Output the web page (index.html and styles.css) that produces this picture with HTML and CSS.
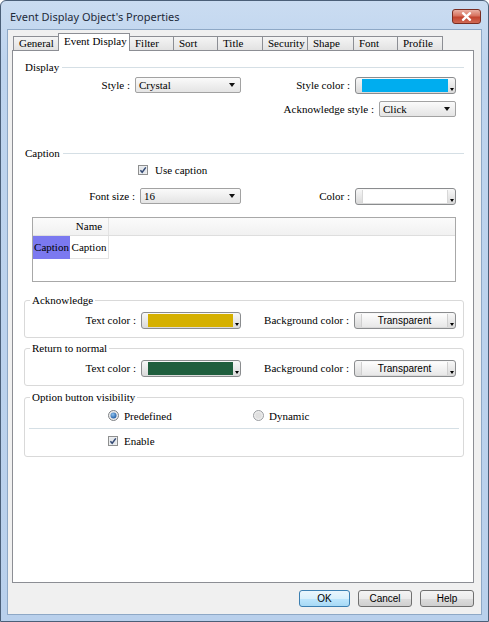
FILE: index.html
```html
<!DOCTYPE html>
<html lang="en">
<head>
  <meta charset="UTF-8" />
  <title>Event Display Object's Properties</title>
  <link rel="stylesheet" href="styles.css">
</head>
<body>
  <div class="window">
    <div class="titlebar">
      <span class="title">Event Display Object's Properties</span>
      <div class="close-btn">
        <svg viewBox="0 0 27 13" width="27" height="13"><path d="M10 3.2 L17 9.8 M17 3.2 L10 9.8" stroke="#fff" stroke-width="2.4" stroke-linecap="round"/></svg>
      </div>
    </div>

    <div class="client">
      <div class="tabs">
        <div class="tab w46">General</div>
        <div class="tab active w72">Event Display</div>
        <div class="tab w45">Filter</div>
        <div class="tab w45">Sort</div>
        <div class="tab w46">Title</div>
        <div class="tab w46">Security</div>
        <div class="tab w47">Shape</div>
        <div class="tab w45">Font</div>
        <div class="tab w46">Profile</div>
      </div>

      <div class="panel">
        <!-- Display -->
        <div class="grp-head">Display</div>
        <div class="row r-style">
          <div class="field">
            <span class="lbl lw111">Style :</span>
            <div class="combo cw106"><span>Crystal</span><i class="arrow"></i></div>
          </div>
          <div class="field push">
            <span class="lbl">Style color :</span>
            <div class="cpick cw101"><span class="swatch sw-blue"></span><i class="corner"></i></div>
          </div>
        </div>
        <div class="row r-ack">
          <div class="field push">
            <span class="lbl">Acknowledge style :</span>
            <div class="combo cw77"><span>Click</span><i class="arrow"></i></div>
          </div>
        </div>

        <!-- Caption -->
        <div class="grp-head gh-caption">Caption</div>
        <div class="check-row cr-caption">
          <svg class="chk" viewBox="0 0 10 10" width="10" height="10"><rect x=".5" y=".5" width="9" height="9" fill="#f3f3f3" stroke="#8e8f8f"/><rect x="1.5" y="1.5" width="7" height="7" fill="#e4e7eb"/><path d="M2.4 5.2 L4.2 7.3 L7.8 2.4" fill="none" stroke="#344a74" stroke-width="1.5"/></svg>
          <span>Use caption</span>
        </div>
        <div class="row r-font">
          <div class="field">
            <span class="lbl lw116">Font size :</span>
            <div class="combo cw101"><span>16</span><i class="arrow"></i></div>
          </div>
          <div class="field push">
            <span class="lbl">Color :</span>
            <div class="cpick cw101"><span class="swatch sw-white"></span><i class="corner"></i></div>
          </div>
        </div>
        <div class="grid">
          <div class="g-head"><span class="g-corner"></span><span class="g-col">Name</span></div>
          <div class="g-row"><span class="g-sel">Caption</span><span class="g-cell">Caption</span></div>
        </div>

        <!-- Acknowledge -->
        <fieldset class="box box-ack">
          <legend>Acknowledge</legend>
          <div class="row">
            <div class="field">
              <span class="lbl lw116">Text color :</span>
              <div class="cpick cw100"><span class="swatch sw-yellow"></span><i class="corner"></i></div>
            </div>
            <div class="field push">
              <span class="lbl">Background color :</span>
              <div class="cpick cw102"><span class="tbtn">Transparent</span><i class="corner"></i></div>
            </div>
          </div>
        </fieldset>

        <!-- Return to normal -->
        <fieldset class="box box-ret">
          <legend>Return to normal</legend>
          <div class="row">
            <div class="field">
              <span class="lbl lw116">Text color :</span>
              <div class="cpick cw100"><span class="swatch sw-green"></span><i class="corner"></i></div>
            </div>
            <div class="field push">
              <span class="lbl">Background color :</span>
              <div class="cpick cw102"><span class="tbtn">Transparent</span><i class="corner"></i></div>
            </div>
          </div>
        </fieldset>

        <!-- Option button visibility -->
        <fieldset class="box box-opt">
          <legend>Option button visibility</legend>
          <div class="radio-row">
            <div class="opt">
              <svg class="rad" viewBox="0 0 11 11" width="11" height="11">
                <defs>
                  <radialGradient id="dot" cx="40%" cy="35%" r="70%"><stop offset="0" stop-color="#8ec3f0"/><stop offset="1" stop-color="#1b57a0"/></radialGradient>
                </defs>
                <circle cx="5.5" cy="5.5" r="5" fill="#ececec" stroke="#7f8286"/>
                <circle cx="5.5" cy="5.5" r="3" fill="url(#dot)"/>
              </svg>
              <span>Predefined</span>
            </div>
            <div class="opt">
              <svg class="rad" viewBox="0 0 11 11" width="11" height="11"><circle cx="5.5" cy="5.5" r="5" fill="#eeeeee" stroke="#9a9da1"/><circle cx="5.5" cy="5.5" r="3.2" fill="#e0e0e0"/></svg>
              <span>Dynamic</span>
            </div>
          </div>
          <div class="sep"></div>
          <div class="check-row cr-enable">
            <svg class="chk" viewBox="0 0 10 10" width="10" height="10"><rect x=".5" y=".5" width="9" height="9" fill="#f3f3f3" stroke="#8e8f8f"/><rect x="1.5" y="1.5" width="7" height="7" fill="#e4e7eb"/><path d="M2.4 5.2 L4.2 7.3 L7.8 2.4" fill="none" stroke="#344a74" stroke-width="1.5"/></svg>
            <span>Enable</span>
          </div>
        </fieldset>
      </div>

      <div class="btnbar">
        <button class="btn default">OK</button>
        <button class="btn">Cancel</button>
        <button class="btn">Help</button>
      </div>
    </div>
  </div>
</body>
</html>
```

FILE: styles.css
```css
* { box-sizing: border-box; }
body {
  margin: 0;
  width: 489px;
  height: 622px;
  overflow: hidden;
  background: #fff;
  font-family: "Liberation Serif", serif;
  font-size: 11px;
  color: #000;
}

/* window frame */
.window {
  width: 489px;
  height: 622px;
  border: 1px solid #4b5f78;
  border-radius: 6px 6px 0 0;
  background: linear-gradient(to bottom, #cadcf1 0, #bed4ee 60px, #b9d0ec 100%);
  display: flex;
  flex-direction: column;
}
.titlebar {
  height: 28px;
  display: flex;
  align-items: flex-start;
  justify-content: space-between;
  padding: 0 7px 0 9px;
}
.title {
  font-family: "Noto Sans", sans-serif;
  font-size: 11px;
  line-height: 14px;
  margin-top: 9px;
  color: #1e2a3a;
}
.close-btn {
  margin-top: 8px;
  width: 29px;
  height: 15px;
  border: 1px solid #7a2d22;
  border-radius: 3px;
  background: linear-gradient(to bottom, #eab0a3 0, #d7725f 45%, #c2442f 55%, #d06a55 100%);
  display: flex;
  align-items: center;
  justify-content: center;
}
.close-btn svg { display: block; }

.client {
  margin: 0 6px;
  height: 586px;
  border: 1px solid #8ea8c6;
  background: #f0f0f0;
}

/* tabs */
.tabs {
  height: 20px;
  display: flex;
  align-items: flex-end;
  padding-left: 5px;
  position: relative;
  z-index: 1;
}
.tab {
  height: 14px;
  margin-right: -1px;
  padding-left: 5px;
  border: 1px solid #8c8e94;
  border-bottom: none;
  background: linear-gradient(to bottom, #f5f5f5, #e2e2e2);
  line-height: 13px;
  white-space: nowrap;
}
.tab.active {
  height: 18px;
  margin-bottom: -1px;
  background: #fff;
  position: relative;
  z-index: 2;
  line-height: 15px;
}
.w45 { width: 45px; }
.w46 { width: 46px; }
.w47 { width: 47px; }
.w72 { width: 72px; }

.panel {
  margin-left: 4px;
  width: 462px;
  height: 533px;
  border: 1px solid #8c8e94;
  background: #fff;
  padding: 10px 9px 0 11px;
}

/* group line headers */
.grp-head {
  display: flex;
  align-items: center;
  height: 13px;
  line-height: 13px;
  padding-left: 1px;
}
.grp-head::after {
  content: "";
  flex: 1;
  height: 1px;
  margin-left: 3px;
  background: #d5dfe5;
}
.gh-caption { margin-top: 30px; }

.row {
  display: flex;
  align-items: center;
  height: 16px;
  padding-right: 8px;
}
.r-style { margin-top: 3px; }
.r-ack { margin-top: 8px; }
.r-font { margin-top: 12px; }
.field {
  display: flex;
  align-items: center;
}
.field.push { margin-left: auto; }
.lbl {
  text-align: right;
  padding-right: 5px;
  white-space: nowrap;
}
.lw111 { width: 111px; }
.lw116 { width: 116px; }

/* drop-down list */
.combo {
  height: 16px;
  display: flex;
  align-items: center;
  justify-content: space-between;
  padding: 0 5px 0 3px;
  border: 1px solid #a2a2a2;
  border-radius: 2px;
  background: linear-gradient(to bottom, #fafafa, #e4e4e4);
}
.arrow {
  width: 0;
  height: 0;
  border-left: 3.5px solid transparent;
  border-right: 3.5px solid transparent;
  border-top: 4px solid #111;
}
.cw77 { width: 77px; }
.cw100 { width: 100px; }
.cw101 { width: 101px; }
.cw102 { width: 102px; }
.cw106 { width: 106px; }

/* colour picker button */
.cpick {
  position: relative;
  height: 17px;
  display: flex;
  padding: 1px 7px 1px 6px;
  border: 1px solid #8a8c8e;
  border-radius: 3px;
  background: linear-gradient(to bottom, #f8f8f8, #d9d9d9);
}
.swatch { flex: 1; }
.sw-blue { background: #00adef; }
.sw-white { background: #fff; border-left: 1px solid #d8d8d8; border-right: 1px solid #d8d8d8; }
.sw-yellow { background: #d5b000; }
.sw-green { background: #1f5e3d; }
.tbtn {
  flex: 1;
  font-family: "Liberation Sans", sans-serif;
  font-size: 10px;
  line-height: 13px;
  text-align: center;
  background: linear-gradient(to bottom, #fdfdfd, #e8e8e8);
  border-left: 1px solid #d0d0d0;
  border-right: 1px solid #d0d0d0;
}
.corner {
  position: absolute;
  right: 1px;
  bottom: 2px;
  width: 0;
  height: 0;
  border-left: 2.5px solid transparent;
  border-right: 2.5px solid transparent;
  border-top: 3px solid #000;
}

/* check boxes */
.check-row {
  display: flex;
  align-items: center;
  height: 12px;
}
.check-row .chk { display: block; }
.check-row span { margin-left: 7px; }
.cr-caption { margin-top: 4px; padding-left: 114px; }
.cr-enable { margin-top: 6px; padding-left: 83px; }
.cr-enable span { margin-left: 6px; }

/* list grid */
.grid {
  margin: 13px 0 0 8px;
  width: 424px;
  height: 65px;
  border: 1px solid #a8a8a8;
  background: #fff;
}
.g-head {
  display: flex;
  height: 18px;
  background: linear-gradient(to bottom, #fbfbfb, #f1f1f1);
  border-bottom: 1px solid #dedede;
}
.g-corner { width: 37px; }
.g-col {
  width: 39px;
  line-height: 17px;
  text-align: center;
  border-right: 1px solid #e3e3e3;
}
.g-row {
  display: flex;
  height: 23px;
}
.g-sel {
  width: 37px;
  background: #7b79f0;
  line-height: 23px;
  text-align: center;
}
.g-cell {
  width: 39px;
  line-height: 22px;
  text-align: center;
  border-right: 1px solid #e3e3e3;
  border-bottom: 1px solid #e3e3e3;
}

/* group boxes */
.box {
  margin: 0;
  padding: 6px 0 9px 0;
  min-width: 0;
  border: 1px solid #d9d9d9;
  border-radius: 3px;
}
.box legend {
  margin-left: 5px;
  padding: 0 2px;
  line-height: 12px;
}
.box .row { padding-right: 7px; }
.box-ack { margin-top: 12px; }
.box-ret { margin-top: 4px; }
.box-opt { margin-top: 5px; }

.radio-row {
  display: flex;
  align-items: center;
  height: 13px;
  padding-left: 83px;
}
.opt {
  display: flex;
  align-items: center;
  width: 145px;
}
.rad { display: block; }
.opt span { margin-left: 5px; }
.sep {
  height: 1px;
  margin: 6px 4px 0;
  background: #d5dfe5;
}

/* dialog buttons */
.btnbar {
  margin-top: 7px;
  height: 17px;
  display: flex;
  justify-content: flex-end;
  gap: 8px;
  padding-right: 7px;
}
.btn {
  width: 54px;
  height: 17px;
  padding: 0;
  font-family: "Liberation Sans", sans-serif;
  font-size: 10px;
  color: #000;
  border: 1px solid #707070;
  border-radius: 3px;
  background: linear-gradient(to bottom, #f4f4f4 0, #ebebeb 50%, #dddddd 51%, #cfcfcf 100%);
}
.btn.default {
  width: 51px;
  border-color: #3c7fb1;
  background: linear-gradient(to bottom, #eaf6fd 0, #d9f0fc 50%, #bee6fd 51%, #a7d9f5 100%);
}
```
